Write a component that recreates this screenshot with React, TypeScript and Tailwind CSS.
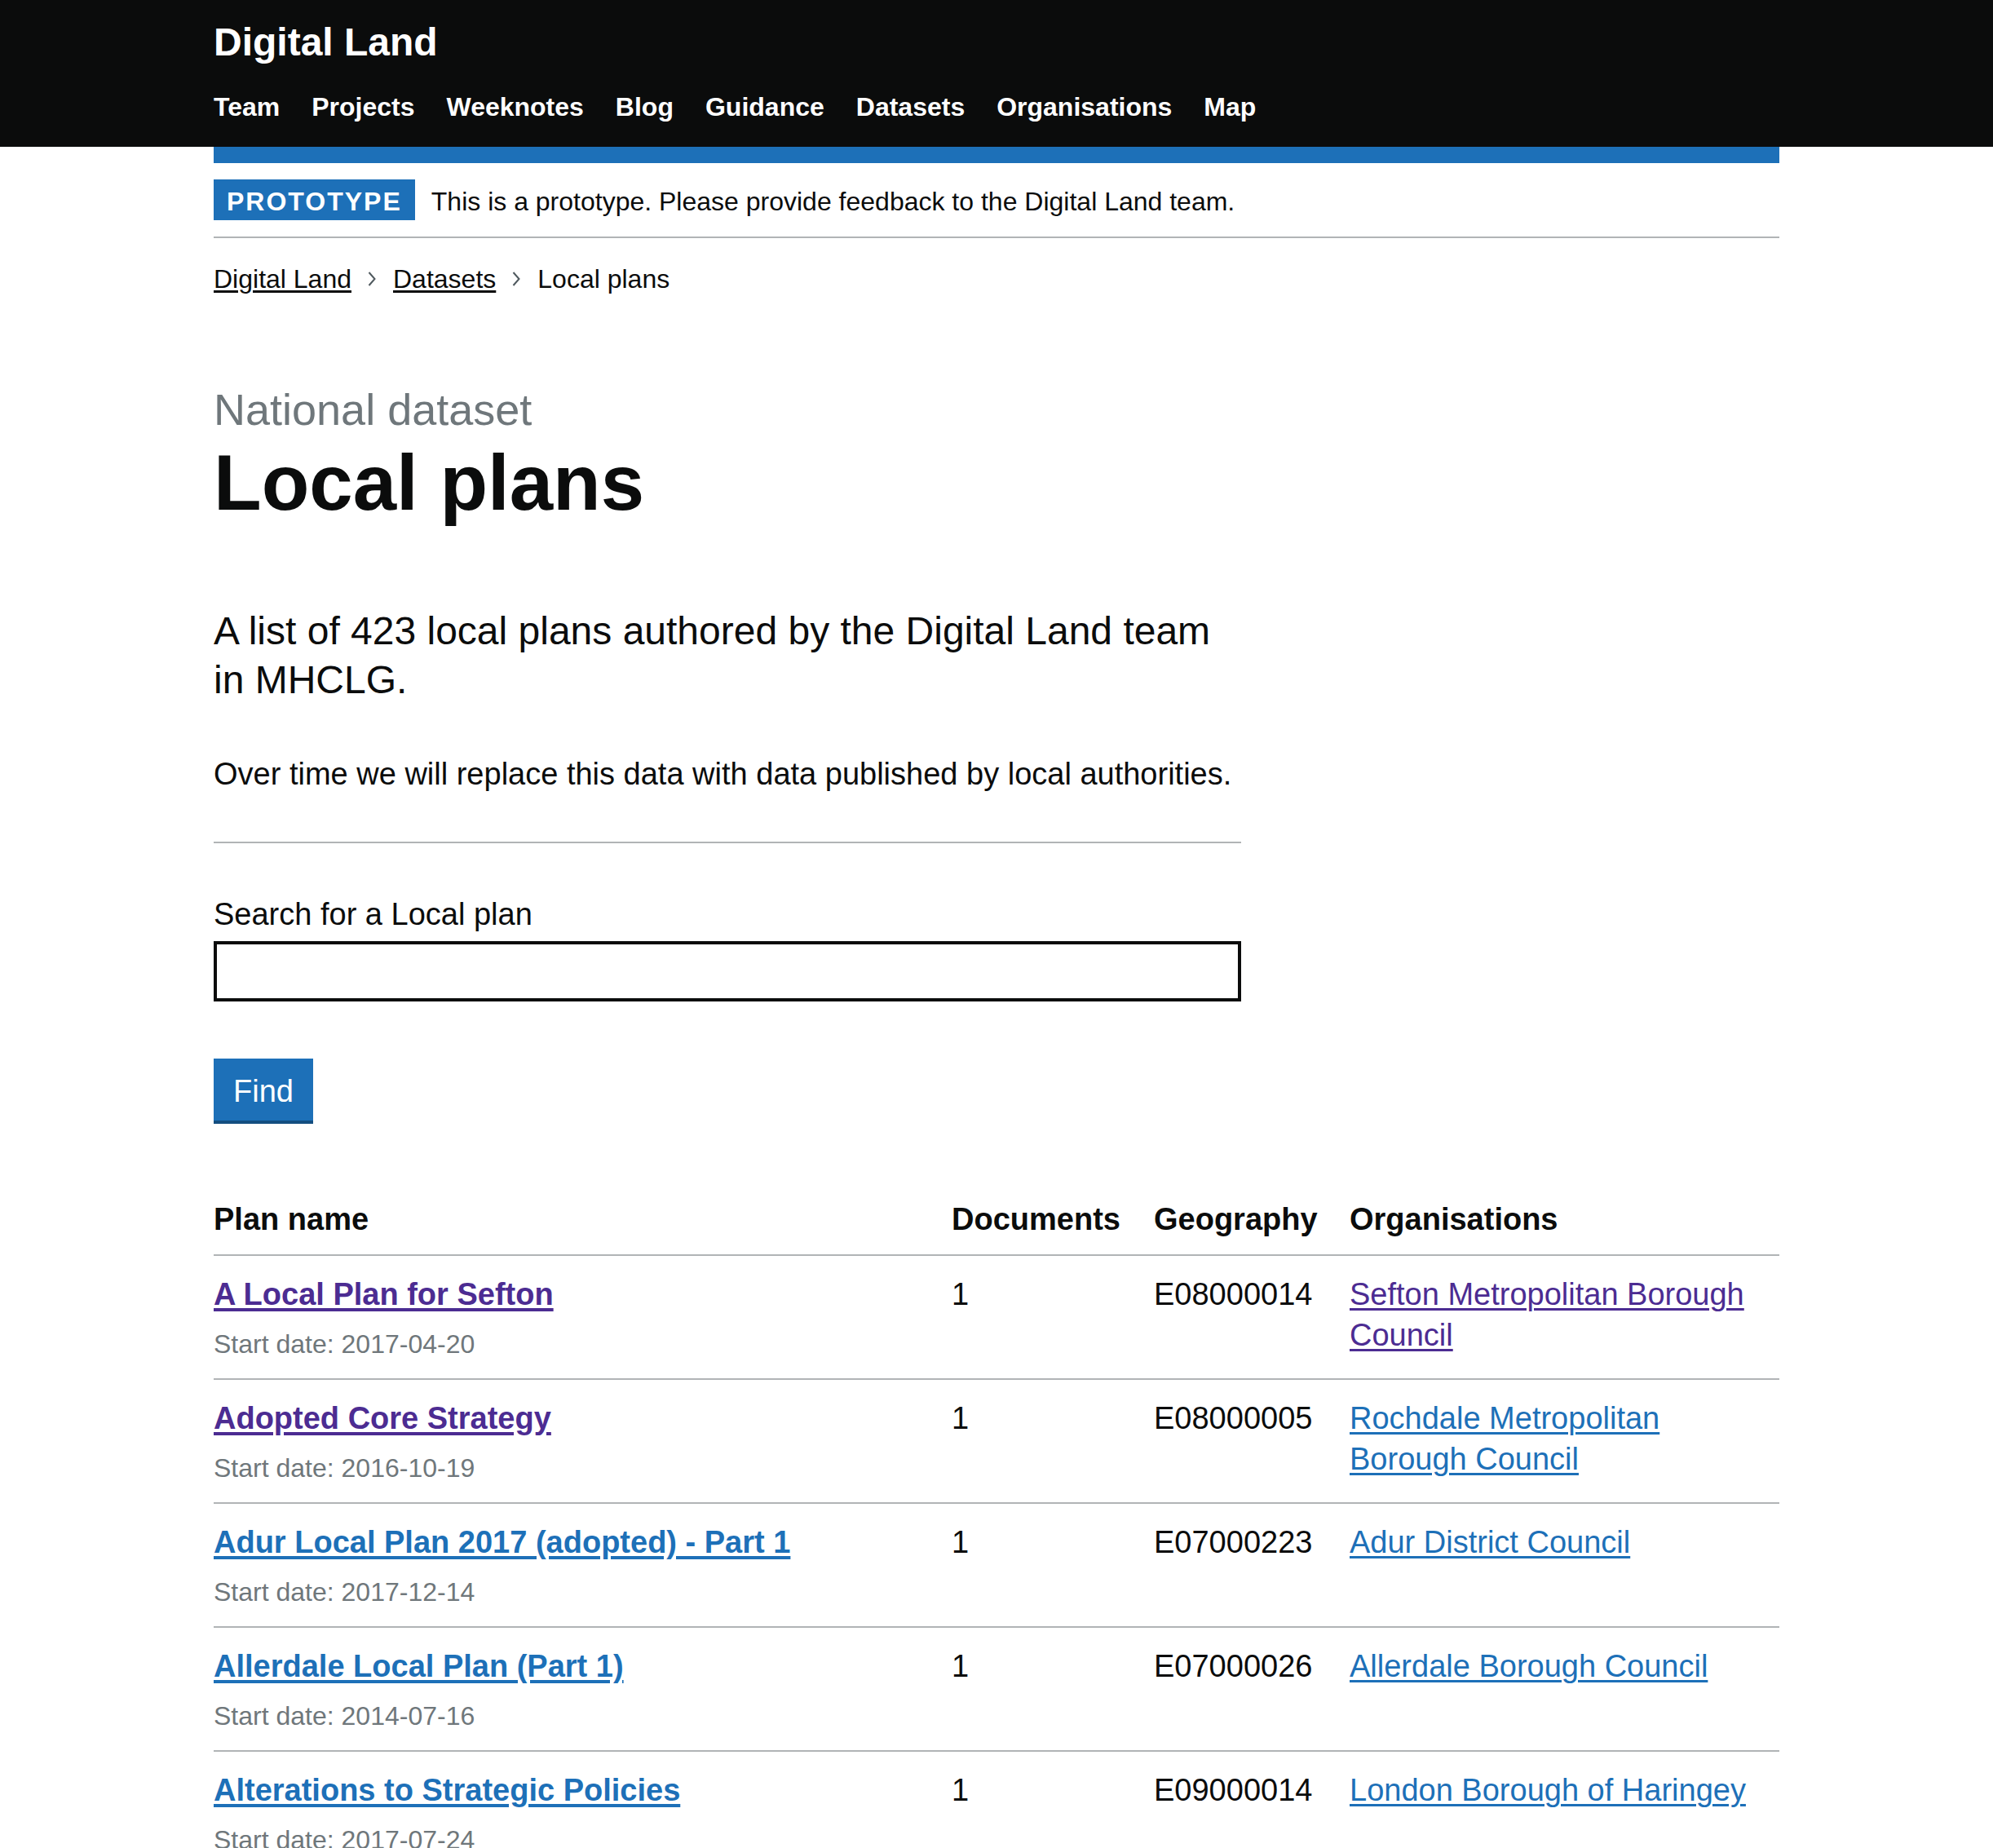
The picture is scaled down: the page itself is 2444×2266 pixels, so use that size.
import React from 'react';

const NAV = ['Team', 'Projects', 'Weeknotes', 'Blog', 'Guidance', 'Datasets', 'Organisations', 'Map'];

type Plan = {
  name: string;
  start: string;
  docs: string;
  geo: string;
  org: string;
  planVisited?: boolean;
  orgVisited?: boolean;
};

const PLANS: Plan[] = [
  { name: 'A Local Plan for Sefton', start: '2017-04-20', docs: '1', geo: 'E08000014', org: 'Sefton Metropolitan Borough Council', planVisited: true, orgVisited: true },
  { name: 'Adopted Core Strategy', start: '2016-10-19', docs: '1', geo: 'E08000005', org: 'Rochdale Metropolitan Borough Council', planVisited: true },
  { name: 'Adur Local Plan 2017 (adopted) - Part 1', start: '2017-12-14', docs: '1', geo: 'E07000223', org: 'Adur District Council' },
  { name: 'Allerdale Local Plan (Part 1)', start: '2014-07-16', docs: '1', geo: 'E07000026', org: 'Allerdale Borough Council' },
  { name: 'Alterations to Strategic Policies', start: '2017-07-24', docs: '1', geo: 'E09000014', org: 'London Borough of Haringey' },
];

const Chevron = () => (
  <svg width="10" height="20" viewBox="0 0 10 20" className="ml-[20px] mr-[21px] shrink-0">
    <path d="M1.5 2 L8.5 10 L1.5 18" fill="none" stroke="#505a5f" strokeWidth="2" />
  </svg>
);

export default function App() {
  return (
    <div className="min-h-screen bg-white text-[#0b0c0c] font-['Liberation_Sans',Arial,sans-serif]">
      {/* Header */}
      <header className="h-[180px] bg-[#0b0c0c]">
        <div className="w-[1920px] mx-auto pt-[28px]">
          <a href="#" className="block text-[48px] leading-[48px] font-bold text-white">Digital Land</a>
          <nav className="mt-[35px] flex gap-[39px]">
            {NAV.map((item) => (
              <a key={item} href="#" className="text-[32px] leading-[40px] font-bold text-white">
                {item}
              </a>
            ))}
          </nav>
        </div>
      </header>

      <div className="w-[1920px] mx-auto">
        <div className="h-[20px] bg-[#1d70b8]" />

        {/* Phase banner */}
        <div className="flex items-center pt-[20px] pb-[20px] border-b-2 border-[#b1b4b6]">
          <strong className="h-[50px] px-[16px] pt-[3px] mr-[20px] flex items-center bg-[#1d70b8] text-white text-[32px] leading-none font-bold uppercase tracking-[2px]">
            Prototype
          </strong>
          <span className="pt-[3px] text-[32px] leading-none">This is a prototype. Please provide feedback to the Digital Land team.</span>
        </div>

        {/* Breadcrumbs */}
        <div className="mt-[30px] flex items-center text-[32px] leading-[40px]">
          <a href="#" className="underline decoration-[3px] underline-offset-[3px]">Digital Land</a>
          <Chevron />
          <a href="#" className="underline decoration-[3px] underline-offset-[3px]">Datasets</a>
          <Chevron />
          <span>Local plans</span>
        </div>

        <main>
          <span className="block mt-[110px] text-[54px] leading-[60px] text-[#6f777b]">National dataset</span>
          <h1 className="mt-[10px] text-[96px] leading-[100px] font-bold">Local plans</h1>

          <div className="w-[1260px]">
            <p className="mt-[102px] text-[48px] leading-[60px]">
              A list of 423 local plans authored by the Digital Land team in MHCLG.
            </p>
            <p className="mt-[60px] text-[38px] leading-[50px]">
              Over time we will replace this data with data published by local authorities.
            </p>
            <hr className="mt-[58px] border-0 border-t-2 border-[#b1b4b6]" />

            <form onSubmit={(e) => e.preventDefault()}>
              <label htmlFor="search" className="block mt-[62px] text-[38px] leading-[50px]">
                Search for a Local plan
              </label>
              <input
                id="search"
                type="text"
                className="block mt-[8px] w-full h-[74px] border-4 border-[#0b0c0c] px-[10px] text-[38px] outline-none"
              />
              <button
                type="submit"
                className="mt-[70px] h-[76px] px-[24px] pt-[3px] flex items-center bg-[#1d70b8] text-white text-[38px] leading-none shadow-[0_4px_0_#144e80]"
              >
                Find
              </button>
            </form>
          </div>

          {/* Table */}
          <table className="mt-[73px] w-full table-fixed border-collapse text-[38px] leading-[50px]">
            <colgroup>
              <col className="w-[905px]" />
              <col className="w-[248px]" />
              <col className="w-[240px]" />
              <col className="w-[527px]" />
            </colgroup>
            <thead>
              <tr className="border-b-2 border-[#b1b4b6]">
                <th className="pt-[23px] pb-[18px] pr-[40px] text-left font-bold">Plan name</th>
                <th className="pt-[23px] pb-[18px] pr-[40px] text-left font-bold">Documents</th>
                <th className="pt-[23px] pb-[18px] pr-[40px] text-left font-bold">Geography</th>
                <th className="pt-[23px] pb-[18px] text-left font-bold">Organisations</th>
              </tr>
            </thead>
            <tbody>
              {PLANS.map((p) => (
                <tr key={p.name} className="border-b-2 border-[#b1b4b6] align-top">
                  <td className="pt-[22px] pb-[22px] pr-[40px]">
                    <a
                      href="#"
                      className={`font-bold underline decoration-[4px] underline-offset-[4px] ${p.planVisited ? 'text-[#4c2c92]' : 'text-[#1d70b8]'}`}
                    >
                      {p.name}
                    </a>
                    <p className="mt-[16px] text-[32px] leading-[40px] text-[#6f777b]">Start date: {p.start}</p>
                  </td>
                  <td className="pt-[22px] pb-[22px] pr-[40px]">{p.docs}</td>
                  <td className="pt-[22px] pb-[22px] pr-[40px]">{p.geo}</td>
                  <td className="pt-[22px] pb-[22px]">
                    <a
                      href="#"
                      className={`underline decoration-[3px] underline-offset-[4px] ${p.orgVisited ? 'text-[#4c2c92]' : 'text-[#1d70b8]'}`}
                    >
                      {p.org}
                    </a>
                  </td>
                </tr>
              ))}
            </tbody>
          </table>
        </main>
      </div>
    </div>
  );
}
